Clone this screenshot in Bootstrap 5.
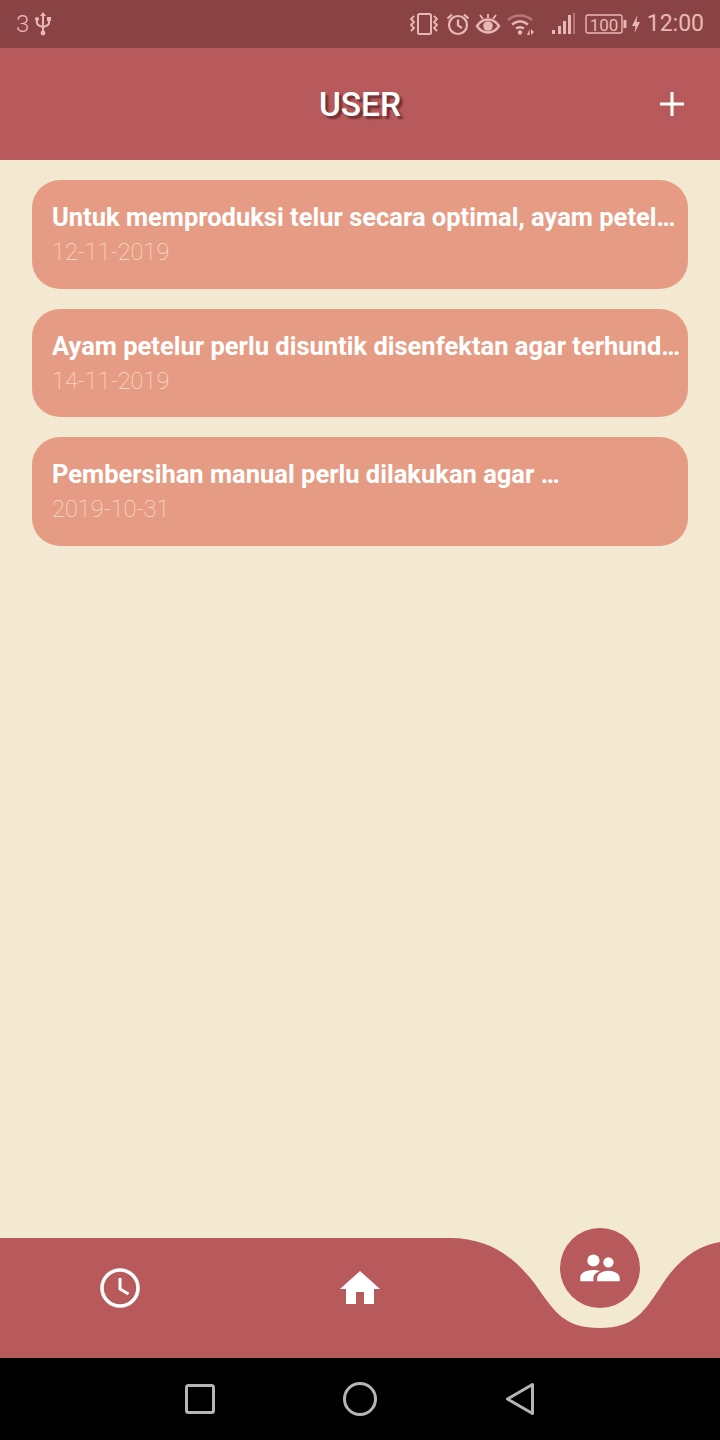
<!DOCTYPE html>
<html lang="en">
<head>
  <meta charset="UTF-8">
  <title>User</title>
  <link href="https://cdn.jsdelivr.net/npm/bootstrap@5.3.0/dist/css/bootstrap.min.css" rel="stylesheet">
  <style>
    body { background: #f3e8d1; font-family: Roboto, sans-serif; height: 1440px; overflow: hidden; }
    .status-strip { height: 48px; background: #8a4345; color: #e8b9b4; font-size: 23px; padding: 0 16px; }
    .status-strip svg { display: block; }
    .status-num { font-size: 24px; font-weight: 300; }
    .top-head { height: 112px; background: #b85a5b; color: #fff; }
    .top-title { font-size: 33.5px; font-weight: 500; line-height: 1; text-shadow: 3px 3px 2px #6f3033; margin-top: 2px; }
    .add-btn { position: absolute; right: 36px; top: 44px; line-height: 0; }
    .news-list { padding: 20px 32px 0; gap: 20px; }
    .news-item { height: 108.5px; background: #e69c84; border-radius: 28px; padding: 20px 0 0 20px; }
    .news-title { color: #fff; font-size: 25.5px; font-weight: 700; line-height: 35px; }
    .news-date { color: #fbe0d3; font-size: 23.6px; font-weight: 100; line-height: 34px; }
    .bottom-nav { height: 120px; }
    .wave { position: absolute; left: 0; top: 0; }
    .nav-spot { position: absolute; line-height: 0; }
    .spot-clock { left: 100px; top: 30px; }
    .spot-home { left: 340px; top: 30px; }
    .spot-user { left: 560px; top: -10px; width: 80px; height: 80px; background: #b85a5b; }
    .android-keys { height: 82px; background: #000; }
  </style>
</head>
<body class="d-flex flex-column">

<div class="status-strip d-flex align-items-center flex-shrink-0">
  <span class="status-num">3</span>
  <svg style="margin-left:6px" width="16" height="24" viewBox="0 0 16 24" fill="none" stroke="#e8b9b4" stroke-width="2">
    <path d="M8 2v19M2 8v3c0 2 2 3 6 4 4-1 6-2 6-4V8"/>
    <path d="M8 0l3 4H5z" fill="#e8b9b4" stroke="none"/>
    <circle cx="8" cy="21" r="2.400" fill="#e8b9b4" stroke="none"/>
    <circle cx="2" cy="7" r="2" fill="#e8b9b4" stroke="none"/>
    <rect x="12" y="5" width="4" height="4" fill="#e8b9b4" stroke="none"/>
  </svg>
  <div class="ms-auto d-flex align-items-center">
    <svg width="30" height="24" viewBox="0 0 30 24" fill="none" stroke="#e8b9b4" stroke-width="2">
      <rect x="9" y="2" width="13" height="20" rx="1.500"/>
      <path d="M5 4L2 7l3 3-3 3 3 3-3 3M25 4l3 3-3 3 3 3-3 3 3 3" stroke-width="1.800"/>
    </svg>
    <svg style="margin-left:7px" width="24" height="24" viewBox="0 0 24 24" fill="none" stroke="#e8b9b4" stroke-width="2.200">
      <circle cx="12" cy="13" r="9"/>
      <path d="M12 7.500v6l4 2.500M1.500 6.500L6 2.500M22.500 6.500L18 2.500"/>
    </svg>
    <svg style="margin-left:5px" width="26" height="24" viewBox="0 0 26 24" fill="none" stroke="#e8b9b4" stroke-width="2.400">
      <path d="M2 14c3-4.500 7-6.500 11-6.500S21 9.500 24 14c-3 4.500-7 6.500-11 6.500S5 18.500 2 14z"/>
      <circle cx="13" cy="14" r="4.800" fill="#e8b9b4" stroke="none"/>
      <path d="M13 2v4M5 3l3 4M21 3l-3 4" stroke-width="1.800"/>
    </svg>
    <svg style="margin-left:6px" width="28" height="24" viewBox="0 0 28 24" fill="none" stroke="#e8b9b4" stroke-width="2.400">
      <path d="M1 8c7-6 17-6 24 0" opacity=".45"/>
      <path d="M5 12.500c5-4 11-4 16 0M9 16.500c3-2 5-2 8 0"/>
      <circle cx="13" cy="20.500" r="2.200" fill="#e8b9b4" stroke="none"/>
      <path d="M20 23l2.500-6v6zM24 17l3 3-3 3z" fill="#e8b9b4" stroke="none"/>
    </svg>
    <svg style="margin-left:16px" width="24" height="24" viewBox="0 0 24 24" fill="#e8b9b4">
      <rect x="1" y="18" width="3" height="4"/>
      <rect x="7" y="14" width="3" height="8"/>
      <rect x="12" y="9" width="3" height="13"/>
      <rect x="17" y="3" width="3" height="19"/>
      <rect x="22" y="1" width="2" height="21" opacity=".45"/>
    </svg>
    <svg style="margin-left:10px" width="42" height="24" viewBox="0 0 42 24" fill="none">
      <rect x="1" y="3" width="36" height="18" rx="2" stroke="#e8b9b4" stroke-width="1.400"/>
      <rect x="38.500" y="8" width="3" height="8" fill="#e8b9b4"/>
      <text x="19" y="18.500" text-anchor="middle" font-family="Roboto, sans-serif" font-size="17" fill="#e8b9b4">100</text>
    </svg>
    <svg style="margin-left:4px" width="10" height="24" viewBox="0 0 10 24" fill="#e8b9b4">
      <path d="M6.500 3L1 14h3.500L3.500 21 9 10H5.500z"/>
    </svg>
    <span style="margin-left:6px">12:00</span>
  </div>
</div>

<header class="top-head position-relative d-flex align-items-center justify-content-center flex-shrink-0">
  <div class="top-title">USER</div>
  <svg class="add-btn" width="24" height="24" viewBox="0 0 24 24" stroke="#fff" stroke-width="3"><path d="M12 0v24M0 12h24"/></svg>
</header>

<main class="d-flex flex-column news-list flex-grow-1">
  <div class="news-item">
    <div class="news-title text-nowrap">Untuk memproduksi telur secara optimal, ayam petel…</div>
    <div class="news-date">12-11-2019</div>
  </div>
  <div class="news-item">
    <div class="news-title text-nowrap">Ayam petelur perlu disuntik disenfektan agar terhund…</div>
    <div class="news-date">14-11-2019</div>
  </div>
  <div class="news-item">
    <div class="news-title text-nowrap">Pembersihan manual perlu dilakukan agar …</div>
    <div class="news-date">2019-10-31</div>
  </div>
</main>

<nav class="bottom-nav position-relative flex-shrink-0">
  <svg class="wave" width="720" height="120" viewBox="0 0 720 120">
    <path fill="#b85a5b" d="M0 0H450C490 0 515 20 535 46C555 75 565 90 600 90C635 90 645 72 660 50C675 25 695 8 720 4V120H0Z"/>
  </svg>
  <a class="nav-spot spot-clock" href="#">
    <svg width="40" height="40" viewBox="0 0 40 40" fill="none" stroke="#fff" stroke-width="3.600">
      <circle cx="20" cy="20" r="18"/>
      <path d="M20 10v11l8.500 5" stroke-width="3"/>
    </svg>
  </a>
  <a class="nav-spot spot-home" href="#">
    <svg width="40" height="40" viewBox="0 0 40 40" fill="#fff">
      <path d="M20 3L0 21h6v15h10V24h8v12h10V21h6z"/>
    </svg>
  </a>
  <a class="nav-spot spot-user rounded-circle d-flex align-items-center justify-content-center" href="#">
    <svg width="40" height="30" viewBox="0 0 42 32" fill="#fff">
      <circle cx="14" cy="8" r="6.500"/>
      <circle cx="30" cy="10" r="5.500"/>
      <path d="M0 30v-4c0-5 7-8 14-8 3 0 5 .5 7 1.300-4 1.700-7 4-7 7.700v3z"/>
      <path d="M18 30v-3c0-5 6-8 12-8s12 3 12 8v3z"/>
    </svg>
  </a>
</nav>

<div class="android-keys d-flex align-items-center flex-shrink-0">
  <svg width="720" height="82" viewBox="0 0 720 82" fill="none" stroke="#b5b5b5" stroke-width="3">
    <rect x="186.500" y="27.500" width="27" height="27" rx="2"/>
    <circle cx="360" cy="41" r="15.500"/>
    <path d="M532.500 26.500V55.500L507.500 41Z" stroke-linejoin="round"/>
  </svg>
</div>

</body>
</html>
